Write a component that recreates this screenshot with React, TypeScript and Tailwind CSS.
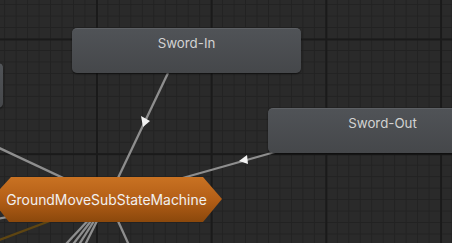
const C = { x: 108, y: 199 };

// bottom fan: where each transition leaves the picture
const fan = [67, 74, 80, 86, 128].map((x) => ({
  x: C.x + (x - C.x) * (64 / 44),
  y: 263,
}));

const StateNode = ({ label, className }: { label: string; className: string }) => (
  <div
    className={`absolute h-[45px] w-[229px] rounded-[5px] border-t border-[#5e6165] bg-linear-to-b from-[#505357] to-[#45474a] pt-[6px] text-center text-[13.3px] leading-[16px] text-[#d2d2d2] shadow-[0_1px_2px_rgba(0,0,0,0.6)] ${className}`}
  >
    {label}
  </div>
);

export default function App() {
  return (
    <div className="relative h-[243px] w-[452px] overflow-hidden bg-[#2a2a2a] font-['Inter','Noto_Sans',sans-serif]">
      {/* Grid + transitions */}
      <svg className="absolute inset-0" width="452" height="243">
        <defs>
          <pattern id="minor" x="4.2" y="4.1" width="11.47" height="11.47" patternUnits="userSpaceOnUse">
            <path d="M0 0.5H11.47M0.5 0V11.47" stroke="#222222" strokeWidth="1" fill="none" />
          </pattern>
          <pattern id="major" x="-18.7" y="-76.2" width="114.7" height="114.7" patternUnits="userSpaceOnUse">
            <path d="M0 1H114.7M1 0V114.7" stroke="#1a1a1a" strokeWidth="2" fill="none" />
          </pattern>
        </defs>
        <rect width="452" height="243" fill="url(#minor)" />
        <rect width="452" height="243" fill="url(#major)" />

        <g stroke="#8e8e8e" strokeWidth="2.3">
          <line x1="168" y1="73" x2={C.x} y2={C.y} />
          <line x1="275" y1="152" x2={C.x} y2={C.y} />
          <line x1="-20" y1="139" x2={C.x} y2={C.y} />
          <line x1="-20" y1="222" x2={C.x} y2={C.y} />
          {fan.map((p, i) => (
            <line key={i} x1={p.x} y1={p.y} x2={C.x} y2={C.y} />
          ))}
        </g>
        <line x1="-30" y1="251" x2={C.x} y2={C.y} stroke="#5e4512" strokeWidth="2.3" />

        <polygon points="141,116 150,121 143,127" fill="#f2f2f2" />
        <polygon points="247,155 239,161 248,164" fill="#f2f2f2" />
      </svg>

      <StateNode label="" className="left-[-226px] top-[63px] h-[43px]" />
      <StateNode label="Sword-In" className="left-[72px] top-[28px]" />
      <StateNode label="Sword-Out" className="left-[268px] top-[108px] h-[44px]" />

      {/* Sub-state machine */}
      <div className="absolute left-[-9px] top-[177px] flex h-[45px] w-[231px] items-center justify-center bg-linear-to-b from-[#c97222] via-[#b45f17] to-[#8b480c] text-[13.9px] text-[#f0f0f0] [clip-path:polygon(20px_0,212px_0,231px_22px,212px_45px,18px_45px,0_22px)]">
        <span className="pt-px">GroundMoveSubStateMachine</span>
      </div>
    </div>
  );
}
